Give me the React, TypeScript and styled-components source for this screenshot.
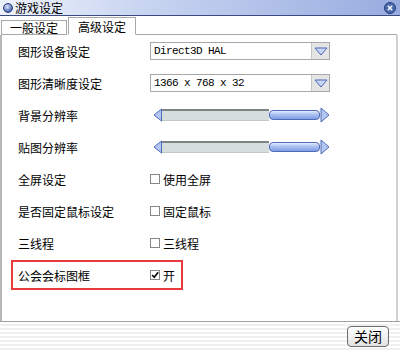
import styled, { createGlobalStyle } from 'styled-components';

const GlobalStyle = createGlobalStyle`
  html, body {
    margin: 0;
    padding: 0;
    background: #ffffff;
  }
  body {
    font-family: "Noto Sans CJK SC", "DejaVu Sans", sans-serif;
    font-size: 12px;
    color: #000;
  }
`

type Setting =
  | { label: string; kind: 'select'; value: string }
  | { label: string; kind: 'slider' }
  | { label: string; kind: 'check'; text: string; checked?: boolean; highlight?: boolean };

const settings: Setting[] = [
  { label: '图形设备设定', kind: 'select', value: 'Direct3D HAL' },
  { label: '图形清晰度设定', kind: 'select', value: '1366 x 768 x 32' },
  { label: '背景分辨率', kind: 'slider' },
  { label: '贴图分辨率', kind: 'slider' },
  { label: '全屏设定', kind: 'check', text: '使用全屏' },
  { label: '是否固定鼠标设定', kind: 'check', text: '固定鼠标' },
  { label: '三线程', kind: 'check', text: '三线程' },
  { label: '公会会标图框', kind: 'check', text: '开', checked: true, highlight: true },
]

const App = () => {
  return (
    <>
      <GlobalStyle />
      <Window>
        <TitleBar>
          <TitleIcon />
          <TitleText>游戏设定</TitleText>
          <CloseDot>
            <svg width="12" height="12" viewBox="0 0 12 12">
              <circle cx="6" cy="6" r="5.5" fill="#4a68b0" stroke="#2c3f78" />
              <path d="M3.8 3.8 L8.2 8.2 M8.2 3.8 L3.8 8.2" stroke="#fff" strokeWidth="1.4" />
            </svg>
          </CloseDot>
        </TitleBar>

        <TabStrip>
          <Tab>一般设定</Tab>
          <Tab active>高级设定</Tab>
          <TabFill />
        </TabStrip>

        <Panel>
          {settings.map((s) => (
            <Row key={s.label} highlight={s.kind === 'check' && !!s.highlight}>
              <Label>{s.label}</Label>
              {s.kind === 'select' && (
                <Select>
                  <SelectValue>{s.value}</SelectValue>
                  <DropButton>
                    <svg width="14" height="9" viewBox="0 0 14 9">
                      <path d="M1 1 L13 1 L7 8 Z" fill="#c8d6f4" stroke="#4a68b8" strokeWidth="1" strokeLinejoin="round" />
                    </svg>
                  </DropButton>
                </Select>
              )}
              {s.kind === 'slider' && (
                <Slider>
                  <svg width="9" height="14" viewBox="0 0 9 14">
                    <path d="M8.5 1 L8.5 13 L1 7 Z" fill="#b4c6f2" stroke="#4d6bb8" strokeLinejoin="round" />
                  </svg>
                  <Track />
                  <Thumb />
                  <svg width="10" height="16" viewBox="0 0 10 16">
                    <path d="M1 1 L1 15 L9 8 Z" fill="#b4c6f2" stroke="#4d6bb8" strokeLinejoin="round" />
                  </svg>
                </Slider>
              )}
              {s.kind === 'check' && (
                <CheckLine>
                  <Box>
                    {s.checked && (
                      <svg width="10" height="10" viewBox="0 0 10 10">
                        <path d="M1.5 5 L4 7.8 L9 1.5" fill="none" stroke="#000" strokeWidth="2" />
                      </svg>
                    )}
                  </Box>
                  {s.text}
                </CheckLine>
              )}
            </Row>
          ))}
        </Panel>

        <Footer>
          <CloseButton>关闭</CloseButton>
        </Footer>
      </Window>
    </>
  )
}

export default App

const Window = styled.div`
  width: 400px;
  height: 350px;
  display: flex;
  flex-direction: column;
  background: #fff;
  overflow: hidden;
`

const TitleBar = styled.div`
  height: 16px;
  display: flex;
  align-items: center;
  padding: 0 3px;
  box-sizing: border-box;
  background: linear-gradient(to right, #eef2fb 0%, #c9d5f1 35%, #98acdf 100%);
  border-bottom: 1px solid #3b4a80;
`

const TitleIcon = styled.div`
  width: 8px;
  height: 8px;
  border-radius: 50%;
  background: radial-gradient(circle at 40% 35%, #dfe8ff, #4a68b0 70%);
  border: 1px solid #2c3f78;
`

const TitleText = styled.div`
  margin-left: 2px;
  font-size: 12px;
  line-height: 14px;
  flex: 1;
`

const CloseDot = styled.div`
  display: flex;
  margin-right: 1px;
`

const TabStrip = styled.div`
  height: 19px;
  display: flex;
  align-items: flex-end;
  padding-left: 1px;
`

const Tab = styled.div<{ active?: boolean }>`
  height: ${(p) => (p.active ? '18px' : '15px')};
  padding: 0 ${(p) => (p.active ? '9px' : '8px')};
  display: flex;
  align-items: center;
  box-sizing: border-box;
  border: 1px solid #a8a8a8;
  border-bottom: ${(p) => (p.active ? '1px solid #fff' : '1px solid #a8a8a8')};
  margin-left: ${(p) => (p.active ? '1px' : '0')};
  background: #fff;
  font-size: 12px;
`

const TabFill = styled.div`
  flex: 1;
  border-bottom: 1px solid #a8a8a8;
  margin-right: 3px;
`

const Panel = styled.div`
  flex: 1;
  display: flex;
  flex-direction: column;
  gap: 2px;
  padding: 1px 0 0 9px;
  margin-right: 2px;
  border-left: 2px solid #b8b8b8;
  border-right: 2px solid #d0d0d0;
`

const Row = styled.div<{ highlight?: boolean }>`
  height: 30px;
  display: grid;
  grid-template-columns: 132px auto;
  align-items: center;
  padding-left: 7px;
  box-sizing: border-box;
  width: ${(p) => (p.highlight ? '172px' : 'auto')};
  box-shadow: ${(p) => (p.highlight ? 'inset 0 0 0 2px #e8393c' : 'none')};
`

const Label = styled.div`
  font-size: 12px;
  white-space: nowrap;
`

const Select = styled.div`
  width: 180px;
  height: 18px;
  display: flex;
  align-items: center;
  border: 1px solid #a8a8a8;
  box-sizing: border-box;
  background: #fff;
`

const SelectValue = styled.div`
  flex: 1;
  padding-left: 3px;
  font-family: "Liberation Mono", "DejaVu Sans Mono", monospace;
  font-size: 11px;
  letter-spacing: -0.6px;
`

const DropButton = styled.div`
  width: 17px;
  height: 16px;
  display: flex;
  align-items: center;
  justify-content: center;
  background: #e4e4e4;
  border-left: 1px solid #c4c4c4;
`

const Slider = styled.div`
  display: flex;
  align-items: center;
  margin-left: 3px;
`

const Track = styled.div`
  width: 107px;
  height: 9px;
  background: #d6dedd;
  border-top: 2px solid #7c8484;
  border-bottom: 1px solid #c0c8c8;
`

const Thumb = styled.div`
  width: 51px;
  height: 10px;
  box-sizing: border-box;
  border: 1px solid #4d6bb8;
  border-radius: 4px;
  background: linear-gradient(#e4ecff 0%, #a9c0f2 45%, #7f9de6 100%);
`

const CheckLine = styled.div`
  display: flex;
  align-items: center;
  gap: 3px;
  font-size: 12px;
`

const Box = styled.div`
  width: 10px;
  height: 10px;
  box-sizing: border-box;
  border: 1px solid #888;
  background: #fff;
  display: flex;
  align-items: center;
  justify-content: center;
  overflow: visible;
`

const Footer = styled.div`
  height: 29px;
  display: flex;
  align-items: center;
  justify-content: flex-end;
  padding-right: 11px;
  border-top: 1px solid #a0a0a0;
  box-sizing: border-box;
  background: repeating-linear-gradient(#ffffff 0 2px, #f0f0f0 2px 4px);
`

const CloseButton = styled.button`
  width: 42px;
  height: 21px;
  padding: 0;
  font-family: "Noto Sans CJK SC", sans-serif;
  font-size: 14px;
  line-height: 19px;
  color: #000;
  border: 1px solid #6c6c6c;
  border-radius: 4px;
  background: linear-gradient(#ffffff, #e2e2e2);
  cursor: pointer;
`
